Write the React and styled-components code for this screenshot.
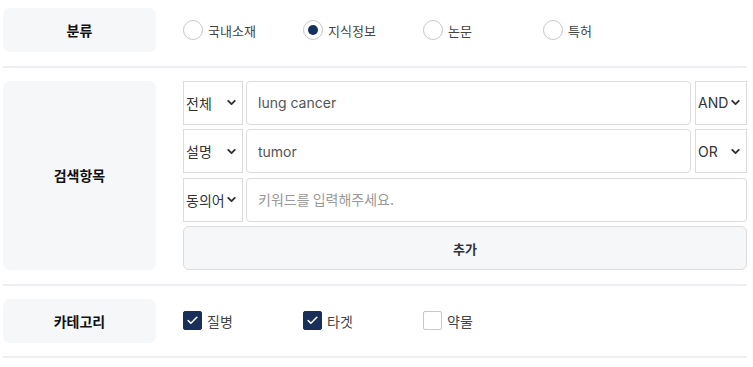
import React, { useState } from "react";
import styled, { createGlobalStyle } from "styled-components";
import { ChevronDown, Check } from "lucide-react";

const GlobalStyle = createGlobalStyle`
  body {
    margin: 0;
    background: #fff;
    font-family: Inter, "Noto Sans CJK KR", sans-serif;
  }
`;

const Wrap = styled.div`
  padding: 0 6px 0 3px;
`;

const Section = styled.div`
  display: flex;
  gap: 27px;
  padding: ${(p) => (p.$first ? "8px" : "13px")} 0 13.5px;
  border-bottom: 2px solid #ededf3;
  align-items: ${(p) => (p.$stretch ? "stretch" : "center")};
`;

const Label = styled.div`
  width: 153px;
  flex-shrink: 0;
  min-height: 44px;
  background: #f6f7f9;
  border-radius: 7px;
  display: flex;
  align-items: center;
  justify-content: center;
  font-family: "Noto Sans CJK KR", sans-serif;
  font-weight: 700;
  font-size: 14px;
  color: #111;
`;

const Options = styled.div`
  display: flex;
  align-items: center;
`;

const Option = styled.label`
  width: 120px;
  display: flex;
  align-items: center;
  gap: 5px;
  font-family: "Noto Sans CJK KR", sans-serif;
  font-size: ${(p) => (p.$big ? "14px" : "13px")};
  color: #444;
  cursor: pointer;
`;

const Radio = styled.span`
  width: 18px;
  height: 18px;
  border-radius: 50%;
  border: 1px solid #c8c8c8;
  display: flex;
  align-items: center;
  justify-content: center;
  flex-shrink: 0;

  &::after {
    content: "";
    width: 10px;
    height: 10px;
    border-radius: 50%;
    background: #16305e;
    display: ${(p) => (p.$on ? "block" : "none")};
  }
`;

const Box = styled.span`
  width: 19px;
  height: 19px;
  box-sizing: border-box;
  border-radius: 2px;
  border: 1px solid ${(p) => (p.$on ? "#1a2e5a" : "#c8c8c8")};
  background: ${(p) => (p.$on ? "#1a2e5a" : "#fff")};
  display: flex;
  align-items: center;
  justify-content: center;
  color: #fff;
  flex-shrink: 0;
`;

const Search = styled.div`
  flex: 1;
  display: flex;
  flex-direction: column;
  gap: 4.5px;
`;

const Line = styled.div`
  display: flex;
  height: 44px;
  gap: 3px;
`;

const Select = styled.div`
  width: ${(p) => p.$w}px;
  flex-shrink: 0;
  box-sizing: border-box;
  border: 1px solid #dcdcdc;
  display: flex;
  align-items: center;
  justify-content: space-between;
  padding: 0 4px 0 2px;
  font-size: 14px;
  color: #333;
  margin-left: ${(p) => (p.$right ? "1px" : "0")};
`;

const Input = styled.input`
  flex: 1;
  min-width: 0;
  box-sizing: border-box;
  border: 1px solid #dcdcdc;
  border-radius: 4px;
  padding: 0 11px;
  font-family: Inter, "Noto Sans CJK KR", sans-serif;
  font-size: 14px;
  color: #555;
  outline: none;

  &::placeholder {
    color: #999;
    font-family: "Noto Sans CJK KR", sans-serif;
  }
`;

const AddButton = styled.button`
  height: 44px;
  border: 1px solid #dcdcdc;
  border-radius: 6px;
  background: #f6f7f9;
  font-family: "Noto Sans CJK KR", sans-serif;
  font-weight: 700;
  font-size: 13px;
  color: #333;
  cursor: pointer;
`;

const kinds = ["국내소재", "지식정보", "논문", "특허"];

const Chevron = () => <ChevronDown size={13} strokeWidth={3.5} />;

const SearchLine = ({ field, value, placeholder, op }) => (
  <Line>
    <Select $w={60}>
      <span>{field}</span>
      <Chevron />
    </Select>
    <Input defaultValue={value} placeholder={placeholder} />
    <Select $w={52} $right>
      <span>{op}</span>
      <Chevron />
    </Select>
  </Line>
);

const App = () => {
  const [kind, setKind] = useState("지식정보");
  const [cats, setCats] = useState({ 질병: true, 타겟: true, 약물: false });

  return (
    <Wrap>
      <GlobalStyle />
      <Section $first>
        <Label>분류</Label>
        <Options>
          {kinds.map((k) => (
            <Option key={k} onClick={() => setKind(k)}>
              <Radio $on={kind === k} />
              {k}
            </Option>
          ))}
        </Options>
      </Section>

      <Section $stretch>
        <Label>검색항목</Label>
        <Search>
          <SearchLine field="전체" value="lung cancer" op="AND" />
          <SearchLine field="설명" value="tumor" op="OR" />
          <Line>
            <Select $w={60}>
              <span>동의어</span>
              <Chevron />
            </Select>
            <Input placeholder="키워드를 입력해주세요." />
          </Line>
          <AddButton>추가</AddButton>
        </Search>
      </Section>

      <Section>
        <Label>카테고리</Label>
        <Options>
          {Object.keys(cats).map((c) => (
            <Option
              key={c}
              $big
              onClick={() => setCats({ ...cats, [c]: !cats[c] })}
            >
              <Box $on={cats[c]}>
                {cats[c] && <Check size={13} strokeWidth={3} />}
              </Box>
              {c}
            </Option>
          ))}
        </Options>
      </Section>
    </Wrap>
  );
};

export default App;
